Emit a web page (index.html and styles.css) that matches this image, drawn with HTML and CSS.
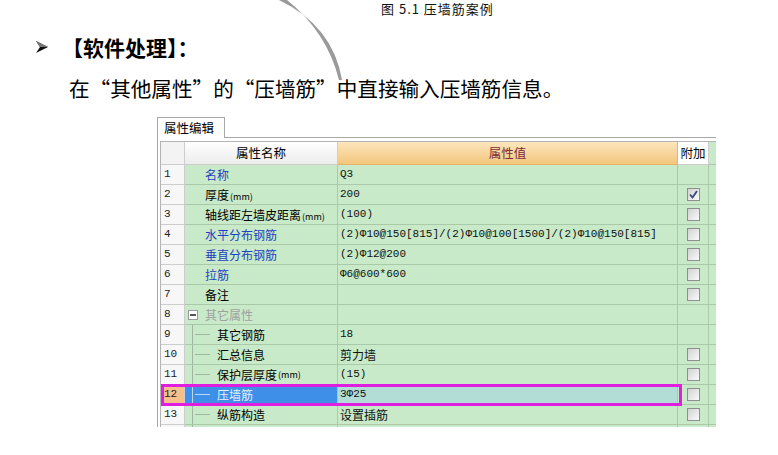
FILE: index.html
```html
<!DOCTYPE html>
<html lang="zh-CN">
<head>
<meta charset="utf-8">
<title>压墙筋</title>
<link rel="stylesheet" href="styles.css">
</head>
<body>
<svg class="curve" width="778" height="120" viewBox="0 0 778 120">
  <path d="M279 0 Q333 26 342 80 L339 80 Q327 32 287 0 Z" fill="#9a9a9a"/>
</svg>
<div class="caption">图 5.1 压墙筋案例</div>
<div class="heading">
  <svg class="bullet" width="12" height="12" viewBox="0 0 12 12"><path d="M0 0 L12 6 L0 12 L4 6 Z" fill="#111"/><path d="M0 0 L12 6 L4 6 Z" fill="#777"/></svg>
  <span class="heading-text">【软件处理】：</span>
</div>
<p class="para">在“其他属性”的“压墙筋”中直接输入压墙筋信息。</p>

<div class="panel">
  <div class="tabs"><div class="tab">属性编辑</div><div class="tab-fill"></div></div>
  <div class="grid-wrap">
    <div class="grid">
      <div class="row head">
        <div class="c num"></div><div class="c name-h">属性名称</div><div class="c val-h">属性值</div><div class="c add-h">附加</div><div class="c fill"></div>
      </div>
      <div class="row"><div class="c num">1</div><div class="c name blue">名称</div><div class="c val">Q3</div><div class="c add"></div><div class="c fill"></div></div>
      <div class="row"><div class="c num">2</div><div class="c name">厚度<small>(mm)</small></div><div class="c val">200</div><div class="c add"><span class="cb checked"><svg width="11" height="11" viewBox="0 0 11 11"><path d="M2 5.5 L4.5 8.5 L9 2" fill="none" stroke="#3a4a7a" stroke-width="1.8"/></svg></span></div><div class="c fill"></div></div>
      <div class="row"><div class="c num">3</div><div class="c name">轴线距左墙皮距离<small>(mm)</small></div><div class="c val">(100)</div><div class="c add"><span class="cb"></span></div><div class="c fill"></div></div>
      <div class="row"><div class="c num">4</div><div class="c name blue">水平分布钢筋</div><div class="c val">(2)Φ10@150[815]/(2)Φ10@100[1500]/(2)Φ10@150[815]</div><div class="c add"><span class="cb"></span></div><div class="c fill"></div></div>
      <div class="row"><div class="c num">5</div><div class="c name blue">垂直分布钢筋</div><div class="c val">(2)Φ12@200</div><div class="c add"><span class="cb"></span></div><div class="c fill"></div></div>
      <div class="row"><div class="c num">6</div><div class="c name blue">拉筋</div><div class="c val">Φ6@600*600</div><div class="c add"><span class="cb"></span></div><div class="c fill"></div></div>
      <div class="row"><div class="c num">7</div><div class="c name">备注</div><div class="c val"></div><div class="c add"><span class="cb"></span></div><div class="c fill"></div></div>
      <div class="row"><div class="c num">8</div><div class="c name group"><span class="toggle"></span>其它属性</div><div class="c val"></div><div class="c add"></div><div class="c fill"></div></div>
      <div class="row"><div class="c num">9</div><div class="c name tree"><span class="branch"></span>其它钢筋</div><div class="c val">18</div><div class="c add"></div><div class="c fill"></div></div>
      <div class="row"><div class="c num">10</div><div class="c name tree"><span class="branch"></span>汇总信息</div><div class="c val cjk">剪力墙</div><div class="c add"><span class="cb"></span></div><div class="c fill"></div></div>
      <div class="row"><div class="c num">11</div><div class="c name tree"><span class="branch"></span>保护层厚度<small>(mm)</small></div><div class="c val">(15)</div><div class="c add"><span class="cb"></span></div><div class="c fill"></div></div>
      <div class="row sel"><div class="c num">12</div><div class="c name tree"><span class="branch"></span>压墙筋</div><div class="c val">3Φ25</div><div class="c add"><span class="cb"></span></div><div class="c fill"></div></div>
      <div class="row"><div class="c num">13</div><div class="c name tree"><span class="branch"></span>纵筋构造</div><div class="c val cjk">设置插筋</div><div class="c add"><span class="cb"></span></div><div class="c fill"></div></div>
      <div class="row"><div class="c num"></div><div class="c name tree"><span class="branch"></span></div><div class="c val"></div><div class="c add"></div><div class="c fill"></div></div>
      <div class="mark"></div>
    </div>
  </div>
</div>
</body>
</html>
```
FILE: styles.css
```css
* { box-sizing: border-box; }
html, body { margin: 0; background: #fff; }
body {
  width: 778px;
  height: 455px;
  overflow: hidden;
  position: relative;
  font-family: "Noto Sans CJK SC", "Noto Sans", sans-serif;
  color: #000;
}
.curve { position: absolute; left: 0; top: 0; pointer-events: none; }

.caption {
  margin-left: 381px;
  height: 18px;
  font-size: 13px;
  letter-spacing: 1px;
  line-height: 18px;
  color: #111;
}
.heading {
  display: flex;
  align-items: center;
  height: 24px;
  margin-top: 17px;
}
.bullet { margin-left: 36px; }
.heading-text {
  margin-left: 14px;
  font-size: 21px;
  font-weight: 700;
  line-height: 24px;
}
.para {
  margin: 14px 0 0 69px;
  font-size: 20.6px;
  line-height: 30px;
}

.panel {
  margin: 14px 0 0 157px;
  width: 559px;
  height: 310px;
  border-left: 1px solid #a8a8a8;
  overflow: hidden;
}
.tabs { display: flex; height: 21px; }
.tab {
  width: 67px;
  height: 21px;
  border-top: 1px solid #a8a8a8;
  border-right: 1px solid #a8a8a8;
  font-size: 12.5px;
  line-height: 20px;
  padding-left: 6px;
  background: #fff;
}
.tab-fill { flex: 1; border-bottom: 1px solid #a8a8a8; }

.grid-wrap { padding: 3px 0 0 2px; }
.grid {
  position: relative;
  border-top: 1px solid #b4b4b4;
  border-left: 1px solid #b4b4b4;
  width: 556px;
}
.row {
  display: grid;
  grid-template-columns: 24px 153px 340px 31px 7px;
  height: 20px;
}
.row.head { height: 23px; }
.c {
  border-right: 1px solid #a9c9a9;
  border-bottom: 1px solid #a9c9a9;
  background: #c8eac8;
  white-space: nowrap;
  overflow: hidden;
  font-size: 12px;
  line-height: 19px;
}
.c.fill { border-right: 0; }
.c.num {
  background: #f7f7f7;
  border-color: #cdcdcd;
  font-family: "Liberation Mono", monospace;
  font-size: 11px;
  padding-left: 3px;
  color: #222;
}
.head .c { line-height: 22px; text-align: center; font-size: 12.5px; }
.name-h { background: linear-gradient(#ffffff, #ececec); border-color: #cdcdcd !important; }
.val-h {
  background: linear-gradient(#fde6bd, #f3c57c);
  color: #7c2a38;
  border-color: #e6b36a !important;
}
.add-h { background: #fff; border-color: #cdcdcd !important; }
.head .c.num { background: #f3f3f3; }

.name { padding-left: 20px; }
.name small { font-size: 9px; margin-left: 1px; }
.blue { color: #1f3fbf; }
.group { padding-left: 3px; color: #a0a0a0; display: flex; align-items: center; }
.toggle {
  width: 10px; height: 10px;
  border: 1px solid #9a9a9a;
  background: #fff;
  margin-right: 7px;
  position: relative;
}
.toggle::after {
  content: "";
  position: absolute;
  left: 1px; right: 1px; top: 3px;
  height: 2px;
  background: #555;
}
.tree { padding-left: 7px; display: flex; align-items: center; }
.branch {
  width: 25px;
  height: 20px;
  align-self: flex-start;
  margin-top: -1px;
  background:
    linear-gradient(#9fb79f, #9fb79f) left top / 1px 100% no-repeat,
    linear-gradient(#9fb79f, #9fb79f) 3px 10px / 15px 1px no-repeat;
  flex: none;
}
.val {
  padding-left: 2px;
  font-family: "Liberation Mono", monospace;
  font-size: 11px;
  color: #111;
}
.val.cjk { font-family: "Noto Sans CJK SC", sans-serif; font-size: 12px; }
.add { display: flex; align-items: center; justify-content: center; }
.cb {
  width: 13px; height: 13px;
  border: 1px solid #8e8e8e;
  background: linear-gradient(135deg, #d2d2d2, #fafafa);
  display: flex; align-items: center; justify-content: center;
}

.sel .num { background: #f8bf8a; }
.sel .name { background: #3d8fe8; color: #e8f2ff; }
.sel .branch {
  background:
    linear-gradient(#bcd6f5, #bcd6f5) left top / 1px 100% no-repeat,
    linear-gradient(#bcd6f5, #bcd6f5) 3px 10px / 15px 1px no-repeat;
}
.sel .val { background: #b2ddd6; }

.mark {
  position: absolute;
  left: 0;
  top: 242px;
  width: 521px;
  height: 22px;
  border: 3px solid #e01ee0;
  pointer-events: none;
}
```
